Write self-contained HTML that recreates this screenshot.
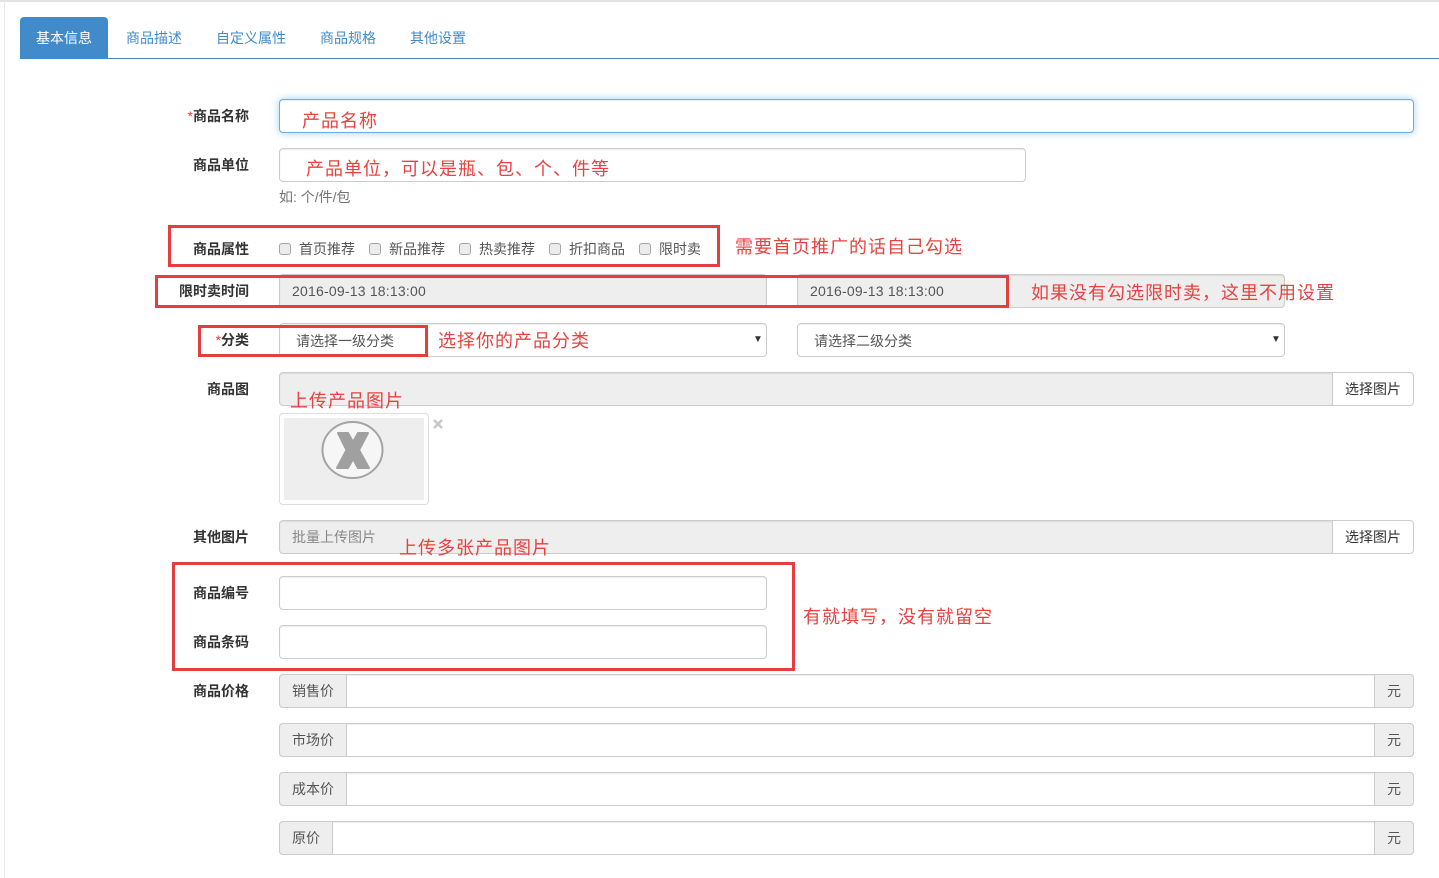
<!DOCTYPE html>
<html lang="zh-CN">
<head>
<meta charset="utf-8">
<title>商品</title>
<style>
html,body{margin:0;padding:0;background:#fff;}
body{width:1439px;height:878px;position:relative;overflow:hidden;font-family:"Liberation Sans","Noto Sans CJK SC",sans-serif;font-size:14px;color:#555;}
.a{position:absolute;box-sizing:border-box;white-space:nowrap;}
.box{position:absolute;box-sizing:border-box;border:1px solid #ccc;border-radius:4px;background:#fff;box-shadow:inset 0 1px 1px rgba(0,0,0,.075);}
.dis{background:#eee;}
.lbl{position:absolute;right:1190px;font-weight:bold;color:#333;font-size:14px;line-height:20px;white-space:nowrap;}
.lbl i{color:#e4393c;font-style:normal;font-weight:normal;}
.tab{position:absolute;top:29px;font-size:14px;line-height:18px;color:#428bca;white-space:nowrap;}
.note{position:absolute;margin-top:1px;color:#e8413f;font-size:18px;line-height:24px;white-space:nowrap;letter-spacing:1px;}
.red{position:absolute;box-sizing:border-box;border:3px solid #e53e3e;}
.t{position:absolute;font-size:14px;line-height:20px;color:#555;white-space:nowrap;}
.ts{letter-spacing:.21px;}
.arr{position:absolute;font-size:10px;line-height:20px;color:#333;white-space:nowrap;}
.cb{position:absolute;box-sizing:border-box;width:12px;height:12px;top:243px;border:1px solid #a5a5a5;border-radius:3px;background:#ececec;}
.addon{position:absolute;box-sizing:border-box;background:#eee;border:1px solid #ccc;font-size:14px;line-height:32px;padding:0 0 0 12px;color:#555;white-space:nowrap;}
</style>
</head>
<body>
<div class="a" style="left:0;top:0;width:1439px;height:2px;background:#e3e3e3;"></div>
<div class="a" style="left:4px;top:0;width:1px;height:878px;background:#e8e8e8;"></div>

<div class="a" style="left:20px;top:58px;width:1419px;height:1px;background:#4a86b8;"></div>
<div class="a" style="left:20px;top:17px;width:88px;height:42px;background:#428bca;border-radius:4px 4px 0 0;"></div>
<div class="tab" style="left:36px;color:#fff;">基本信息</div>
<div class="tab" style="left:126px;">商品描述</div>
<div class="tab" style="left:216px;">自定义属性</div>
<div class="tab" style="left:320px;">商品规格</div>
<div class="tab" style="left:410px;">其他设置</div>

<div class="lbl" style="top:106px;"><i>*</i>商品名称</div>
<div class="box" style="left:279px;top:99px;width:1135px;height:34px;border-color:#66afe9;box-shadow:inset 0 1px 1px rgba(0,0,0,.075),0 0 8px rgba(102,175,233,.6);"></div>
<div class="note" style="left:302px;top:108px;">产品名称</div>

<div class="lbl" style="top:155px;">商品单位</div>
<div class="box" style="left:279px;top:148px;width:747px;height:34px;"></div>
<div class="note" style="left:306px;top:156px;">产品单位，可以是瓶、包、个、件等</div>
<div class="t" style="left:279px;top:187px;color:#737373;">如: 个/件/包</div>

<div class="lbl" style="top:239px;">商品属性</div>
<div class="cb" style="left:279px;"></div><div class="t" style="left:299px;top:239px;">首页推荐</div>
<div class="cb" style="left:369px;"></div><div class="t" style="left:389px;top:239px;">新品推荐</div>
<div class="cb" style="left:459px;"></div><div class="t" style="left:479px;top:239px;">热卖推荐</div>
<div class="cb" style="left:549px;"></div><div class="t" style="left:569px;top:239px;">折扣商品</div>
<div class="cb" style="left:639px;"></div><div class="t" style="left:659px;top:239px;">限时卖</div>
<div class="red" style="left:168px;top:225px;width:552px;height:42px;"></div>
<div class="note" style="left:735px;top:234px;">需要首页推广的话自己勾选</div>

<div class="lbl" style="top:281px;">限时卖时间</div>
<div class="box dis" style="left:279px;top:274px;width:488px;height:34px;"></div>
<div class="t ts" style="left:292px;top:281px;">2016-09-13 18:13:00</div>
<div class="box dis" style="left:797px;top:274px;width:488px;height:34px;"></div>
<div class="t ts" style="left:810px;top:281px;">2016-09-13 18:13:00</div>
<div class="red" style="left:155px;top:275px;width:854px;height:33px;"></div>
<div class="note" style="left:1031px;top:280px;">如果没有勾选限时卖，这里不用设置</div>

<div class="lbl" style="top:330px;"><i>*</i>分类</div>
<div class="box" style="left:279px;top:323px;width:488px;height:34px;"></div>
<div class="t" style="left:296px;top:331px;">请选择一级分类</div>
<div class="arr" style="left:753px;top:330px;">▼</div>
<div class="box" style="left:797px;top:323px;width:488px;height:34px;"></div>
<div class="t" style="left:814px;top:331px;">请选择二级分类</div>
<div class="arr" style="left:1271px;top:330px;">▼</div>
<div class="red" style="left:198px;top:325px;width:230px;height:32px;"></div>
<div class="note" style="left:438px;top:328px;">选择你的产品分类</div>

<div class="lbl" style="top:379px;">商品图</div>
<div class="box dis" style="left:279px;top:372px;width:1054px;height:34px;border-radius:4px 0 0 4px;"></div>
<div class="box" style="left:1332px;top:372px;width:82px;height:34px;border-radius:0 4px 4px 0;box-shadow:none;"></div>
<div class="t" style="left:1345px;top:379px;color:#333;">选择图片</div>
<div class="note" style="left:290px;top:388px;">上传产品图片</div>
<div class="a" style="left:279px;top:413px;width:150px;height:92px;border:1px solid #ddd;border-radius:4px;background:#fff;"></div>
<div class="a" style="left:284px;top:418px;width:140px;height:82px;background:#eee;"></div>
<svg class="a" style="left:318px;top:418px;" width="70" height="64" viewBox="0 0 70 64">
<ellipse cx="34.5" cy="32" rx="30" ry="28" fill="#f6f6f6" stroke="#a3a3a3" stroke-width="2"/>
<path d="M20 15H30L35 24L40 15H50L41 32L51 50H40L35 41L30 50H19L28.5 32Z" fill="#a0a0a0" stroke="#a0a0a0" stroke-width="2" stroke-linejoin="round"/>
</svg>
<svg class="a" style="left:432px;top:418px;" width="12" height="12" viewBox="0 0 12 12">
<path d="M2 2L10 10M10 2L2 10" stroke="#c8c8c8" stroke-width="2.6" fill="none"/>
</svg>

<div class="lbl" style="top:527px;">其他图片</div>
<div class="box dis" style="left:279px;top:520px;width:1054px;height:34px;border-radius:4px 0 0 4px;"></div>
<div class="t" style="left:292px;top:527px;color:#888;">批量上传图片</div>
<div class="box" style="left:1332px;top:520px;width:82px;height:34px;border-radius:0 4px 4px 0;box-shadow:none;"></div>
<div class="t" style="left:1345px;top:527px;color:#333;">选择图片</div>
<div class="note" style="left:399px;top:535px;">上传多张产品图片</div>

<div class="lbl" style="top:583px;">商品编号</div>
<div class="box" style="left:279px;top:576px;width:488px;height:34px;"></div>
<div class="lbl" style="top:632px;">商品条码</div>
<div class="box" style="left:279px;top:625px;width:488px;height:34px;"></div>
<div class="red" style="left:172px;top:562px;width:623px;height:109px;"></div>
<div class="note" style="left:803px;top:604px;">有就填写，没有就留空</div>

<div class="lbl" style="top:681px;">商品价格</div>

<div class="box" style="left:279px;top:674px;width:1135px;height:34px;"></div>
<div class="addon" style="left:279px;top:674px;width:68px;height:34px;border-radius:4px 0 0 4px;">销售价</div>
<div class="addon" style="left:1374px;top:674px;width:40px;height:34px;border-radius:0 4px 4px 0;">元</div>

<div class="box" style="left:279px;top:723px;width:1135px;height:34px;"></div>
<div class="addon" style="left:279px;top:723px;width:68px;height:34px;border-radius:4px 0 0 4px;">市场价</div>
<div class="addon" style="left:1374px;top:723px;width:40px;height:34px;border-radius:0 4px 4px 0;">元</div>

<div class="box" style="left:279px;top:772px;width:1135px;height:34px;"></div>
<div class="addon" style="left:279px;top:772px;width:68px;height:34px;border-radius:4px 0 0 4px;">成本价</div>
<div class="addon" style="left:1374px;top:772px;width:40px;height:34px;border-radius:0 4px 4px 0;">元</div>

<div class="box" style="left:279px;top:821px;width:1135px;height:34px;"></div>
<div class="addon" style="left:279px;top:821px;width:54px;height:34px;border-radius:4px 0 0 4px;">原价</div>
<div class="addon" style="left:1374px;top:821px;width:40px;height:34px;border-radius:0 4px 4px 0;">元</div>
</body>
</html>
